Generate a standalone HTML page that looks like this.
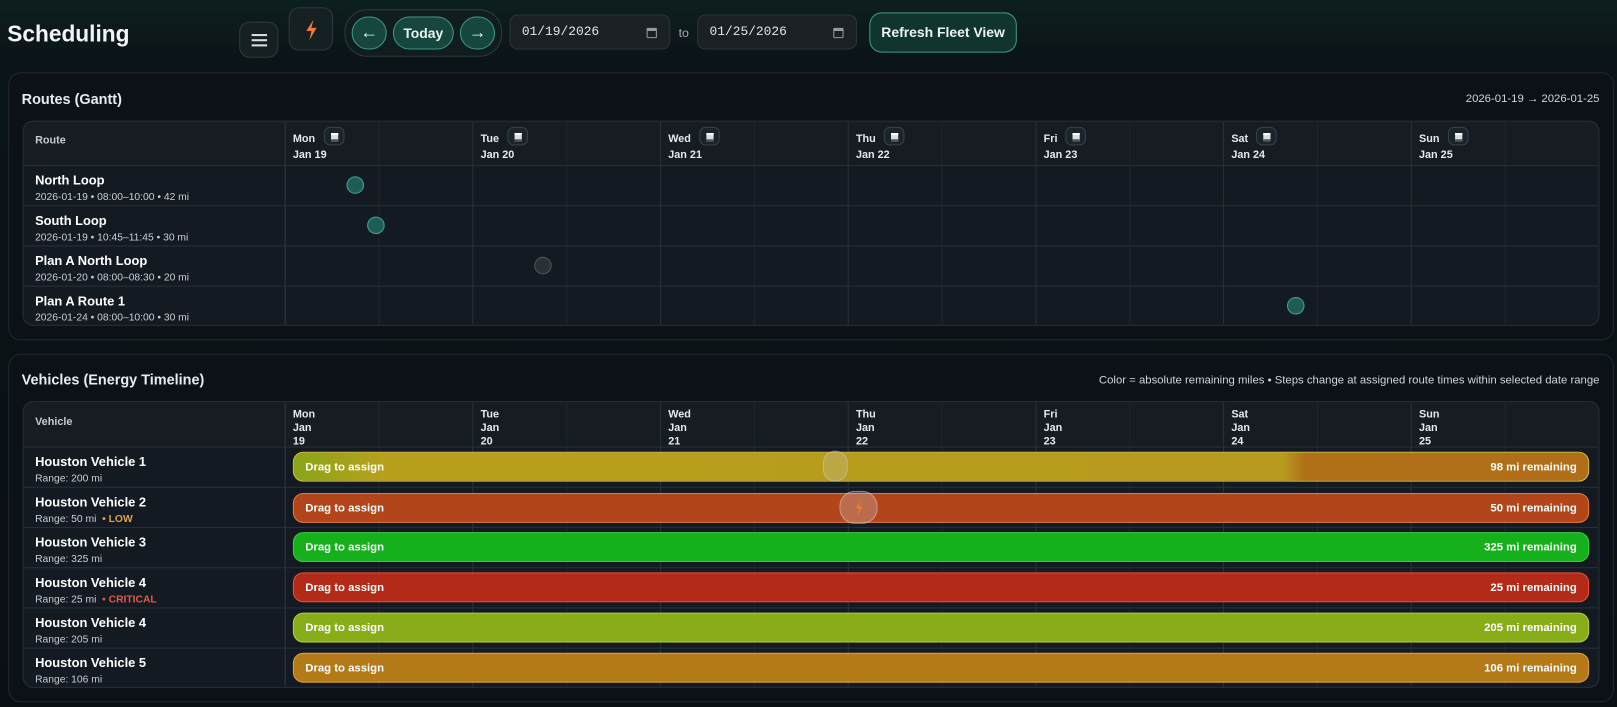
<!DOCTYPE html><html><head><style>
*{box-sizing:border-box;margin:0;padding:0}
body{width:1617px;height:707px;overflow:hidden;background:linear-gradient(180deg,#0d1f1e 0%,#0b1418 60px,#0a0f14 100%);font-family:"Liberation Sans",sans-serif;color:#e8ecef;position:relative}
#w{position:absolute;left:0;top:0;width:1568px;height:686px;transform:scale(1.03125);transform-origin:0 0}
.a{position:absolute}
.btn{position:absolute;border:1px solid #2c3a3c;border-radius:10px;background:#142022}
.pill{position:absolute;border:1px solid #3a9c86;border-radius:16px;background:#16463e;color:#e8f4f0;font-weight:bold;font-size:13.5px;display:flex;align-items:center;justify-content:center}
.date{position:absolute;border:1px solid #2c3538;border-radius:8px;background:#1a2023;font-family:"Liberation Mono",monospace;font-size:12.5px;color:#dfe5e8;padding-left:11px;display:flex;align-items:center}
.cal{position:absolute;right:12px;top:12px;width:10px;height:10px;border:1.5px solid #999;border-top-width:3px;border-radius:1px}
.panel{position:absolute;left:8px;width:1557px;border:1px solid #1e2830;border-radius:12px;background:#0c1117}
.grid{position:absolute;left:22px;width:1529px;border:1px solid #263038;border-radius:10px;background:#141a21;overflow:hidden}
.vl{position:absolute;top:0;bottom:0;width:1px;background:#283139}
.hl{position:absolute;left:0;right:0;height:1px;background:#263038}
.t{position:absolute;font-size:12.5px;font-weight:bold;color:#fff}
.s{position:absolute;font-size:10px;color:#c8cfd4;white-space:nowrap}
.hd{position:absolute;font-size:10.5px;font-weight:bold;color:#e6e9ec;line-height:13px}
.ic{display:inline-block;width:20px;height:18px;border:1px solid #36414a;border-radius:6px;background:#1c242b;vertical-align:middle;margin-left:8px;position:relative;top:-3px}
.ic:after{content:"";position:absolute;left:6px;top:5px;width:7px;height:6px;background:#ddd;border-top:2px solid #fff;box-shadow:inset 0 -2px 0 #555}
.bar{position:absolute;left:284px;width:1257px;height:29px;border-radius:10px;font-size:11px;font-weight:bold;color:#fff;display:flex;align-items:center;justify-content:space-between;padding:0 11px}
.dot{position:absolute;width:17px;height:17px;border-radius:50%;background:#1f5c56;border:1px solid #3ba89a}
.rt{position:absolute;right:17px;font-size:11px;color:#d0d6da;white-space:nowrap}
</style></head><body><div id="w">
<div class="a" style="left:7px;top:20px;font-size:22px;font-weight:bold;color:#f2f5f6">Scheduling</div>
<div class="btn" style="left:232px;top:21px;width:38px;height:35px"><div class="a" style="left:11px;top:11px;width:15px;height:2px;background:#ddd;box-shadow:0 5px 0 #ddd,0 10px 0 #ddd"></div></div>
<div class="btn" style="left:280px;top:7px;width:43px;height:42px"><svg class="a" style="left:14px;top:11px" width="14" height="20" viewBox="0 0 14 20"><path d="M9 0 L2 11 H7 L5 20 L12 8 H7 Z" fill="#f07a2e"/></svg></div>
<div class="a" style="left:334px;top:9px;width:153px;height:46px;border:1px solid #2a3a3a;border-radius:22px;background:#111c1e"></div>
<div class="pill" style="left:341px;top:16px;width:34px;height:32px;font-size:17px">←</div>
<div class="pill" style="left:381px;top:16px;width:59px;height:32px">Today</div>
<div class="pill" style="left:446px;top:16px;width:34px;height:32px;font-size:17px">→</div>
<div class="date" style="left:494px;top:14px;width:156px;height:34px">01/19/2026<div class="cal"></div></div>
<div class="a" style="left:658px;top:25px;font-size:12px;color:#aab">to</div>
<div class="date" style="left:676px;top:14px;width:155px;height:34px">01/25/2026<div class="cal"></div></div>
<div class="pill" style="left:843px;top:12px;width:143px;height:39px;border-radius:12px;background:#12342f">Refresh Fleet View</div>

<div class="panel" style="top:70px;height:260px"></div>
<div class="a" style="left:21px;top:88px;font-size:14px;font-weight:bold">Routes (Gantt)</div>
<div class="rt" style="top:90px">2026-01-19 → 2026-01-25</div>
<div class="grid" style="top:117px;height:199px">
<div class="a" style="left:0;top:0;width:1529px;height:42px;background:#161c22"></div>
<div class="vl" style="left:253px;background:#2f3941"></div>
<div class="vl" style="left:435px"></div><div class="vl" style="left:617px"></div><div class="vl" style="left:799px"></div><div class="vl" style="left:981px"></div><div class="vl" style="left:1163px"></div><div class="vl" style="left:1345px"></div>
<div class="vl" style="left:344px;background:#1e262d"></div><div class="vl" style="left:526px;background:#1e262d"></div><div class="vl" style="left:708px;background:#1e262d"></div><div class="vl" style="left:890px;background:#1e262d"></div><div class="vl" style="left:1072px;background:#1e262d"></div><div class="vl" style="left:1254px;background:#1e262d"></div><div class="vl" style="left:1436px;background:#1e262d"></div>
<div class="hl" style="top:42px"></div><div class="hl" style="top:81px"></div><div class="hl" style="top:120px"></div><div class="hl" style="top:159px"></div>
<div class="hd" style="left:11px;top:12px;color:#c4cbd0">Route</div>
<div class="hd" style="left:261px;top:8px">Mon<span class="ic"></span><br>Jan 19</div>
<div class="hd" style="left:443px;top:8px">Tue<span class="ic"></span><br>Jan 20</div>
<div class="hd" style="left:625px;top:8px">Wed<span class="ic"></span><br>Jan 21</div>
<div class="hd" style="left:807px;top:8px">Thu<span class="ic"></span><br>Jan 22</div>
<div class="hd" style="left:989px;top:8px">Fri<span class="ic"></span><br>Jan 23</div>
<div class="hd" style="left:1171px;top:8px">Sat<span class="ic"></span><br>Jan 24</div>
<div class="hd" style="left:1353px;top:8px">Sun<span class="ic"></span><br>Jan 25</div>
<div class="t" style="left:11px;top:50px">North Loop</div><div class="s" style="left:11px;top:68px">2026-01-19 • 08:00–10:00 • 42 mi</div>
<div class="t" style="left:11px;top:89px">South Loop</div><div class="s" style="left:11px;top:107px">2026-01-19 • 10:45–11:45 • 30 mi</div>
<div class="t" style="left:11px;top:128px">Plan A North Loop</div><div class="s" style="left:11px;top:146px">2026-01-20 • 08:00–08:30 • 20 mi</div>
<div class="t" style="left:11px;top:167px">Plan A Route 1</div><div class="s" style="left:11px;top:185px">2026-01-24 • 08:00–10:00 • 30 mi</div>
<div class="dot" style="left:313px;top:53px"></div>
<div class="dot" style="left:333px;top:92px"></div>
<div class="dot" style="left:495px;top:131px;background:#2a3036;border-color:#4a545c"></div>
<div class="dot" style="left:1225px;top:170px"></div>
</div>

<div class="panel" style="top:343px;height:338px"></div>
<div class="a" style="left:21px;top:360px;font-size:14px;font-weight:bold">Vehicles (Energy Timeline)</div>
<div class="rt" style="top:363px">Color = absolute remaining miles • Steps change at assigned route times within selected date range</div>
<div class="grid" style="top:389px;height:278px">
<div class="a" style="left:0;top:0;width:1529px;height:43px;background:#161c22"></div>
<div class="vl" style="left:253px;background:#2f3941"></div>
<div class="vl" style="left:435px"></div><div class="vl" style="left:617px"></div><div class="vl" style="left:799px"></div><div class="vl" style="left:981px"></div><div class="vl" style="left:1163px"></div><div class="vl" style="left:1345px"></div>
<div class="vl" style="left:344px;background:#1e262d"></div><div class="vl" style="left:526px;background:#1e262d"></div><div class="vl" style="left:708px;background:#1e262d"></div><div class="vl" style="left:890px;background:#1e262d"></div><div class="vl" style="left:1072px;background:#1e262d"></div><div class="vl" style="left:1254px;background:#1e262d"></div><div class="vl" style="left:1436px;background:#1e262d"></div>
<div class="hl" style="top:43px"></div><div class="hl" style="top:82px"></div><div class="hl" style="top:121px"></div><div class="hl" style="top:160px"></div><div class="hl" style="top:199px"></div><div class="hl" style="top:238px"></div>
<div class="hd" style="left:11px;top:13px;color:#c4cbd0">Vehicle</div>
<div class="hd" style="left:261px;top:6px">Mon<br>Jan<br>19</div>
<div class="hd" style="left:443px;top:6px">Tue<br>Jan<br>20</div>
<div class="hd" style="left:625px;top:6px">Wed<br>Jan<br>21</div>
<div class="hd" style="left:807px;top:6px">Thu<br>Jan<br>22</div>
<div class="hd" style="left:989px;top:6px">Fri<br>Jan<br>23</div>
<div class="hd" style="left:1171px;top:6px">Sat<br>Jan<br>24</div>
<div class="hd" style="left:1353px;top:6px">Sun<br>Jan<br>25</div>
<div class="t" style="left:11px;top:51px">Houston Vehicle 1</div><div class="s" style="left:11px;top:69px">Range: 200 mi</div>
<div class="t" style="left:11px;top:90px">Houston Vehicle 2</div><div class="s" style="left:11px;top:108px">Range: 50 mi &nbsp;<b style="color:#e0a050">• LOW</b></div>
<div class="t" style="left:11px;top:129px">Houston Vehicle 3</div><div class="s" style="left:11px;top:147px">Range: 325 mi</div>
<div class="t" style="left:11px;top:168px">Houston Vehicle 4</div><div class="s" style="left:11px;top:186px">Range: 25 mi &nbsp;<b style="color:#e05a4a">• CRITICAL</b></div>
<div class="t" style="left:11px;top:207px">Houston Vehicle 4</div><div class="s" style="left:11px;top:225px">Range: 205 mi</div>
<div class="t" style="left:11px;top:246px">Houston Vehicle 5</div><div class="s" style="left:11px;top:264px">Range: 106 mi</div>
</div>
<div class="bar" style="top:438px;background:linear-gradient(90deg,#8aa51a 0,#b9a01c 90px,#b89a1c 960px,#b07018 980px,#b06e18 100%);border:1px solid #d8c040"><span>Drag to assign</span><span>98 mi remaining</span></div>
<div class="a" style="left:798px;top:437px;width:24px;height:30px;border-radius:12px;background:rgba(200,200,200,.25);border:1px solid rgba(220,220,220,.35)"></div>
<div class="bar" style="top:478px;background:#b2461a;border:1px solid #e67c3a"><span>Drag to assign</span><span>50 mi remaining</span></div>
<div class="a" style="left:814px;top:476px;width:37px;height:32px;border-radius:15px;background:rgba(210,200,200,.3);border:1px solid rgba(230,220,220,.4)"><svg class="a" style="left:13px;top:8px" width="10" height="15" viewBox="0 0 14 20"><path d="M9 0 L2 11 H7 L5 20 L12 8 H7 Z" fill="#f07a2e"/></svg></div>
<div class="bar" style="top:516px;background:#16b01c;border:1px solid #3ad040"><span>Drag to assign</span><span>325 mi remaining</span></div>
<div class="bar" style="top:555px;background:#b42a18;border:1px solid #e8503c"><span>Drag to assign</span><span>25 mi remaining</span></div>
<div class="bar" style="top:594px;background:#88ad18;border:1px solid #b4d040"><span>Drag to assign</span><span>205 mi remaining</span></div>
<div class="bar" style="top:633px;background:#b47a18;border:1px solid #d8a040"><span>Drag to assign</span><span>106 mi remaining</span></div>
</div></body></html>
